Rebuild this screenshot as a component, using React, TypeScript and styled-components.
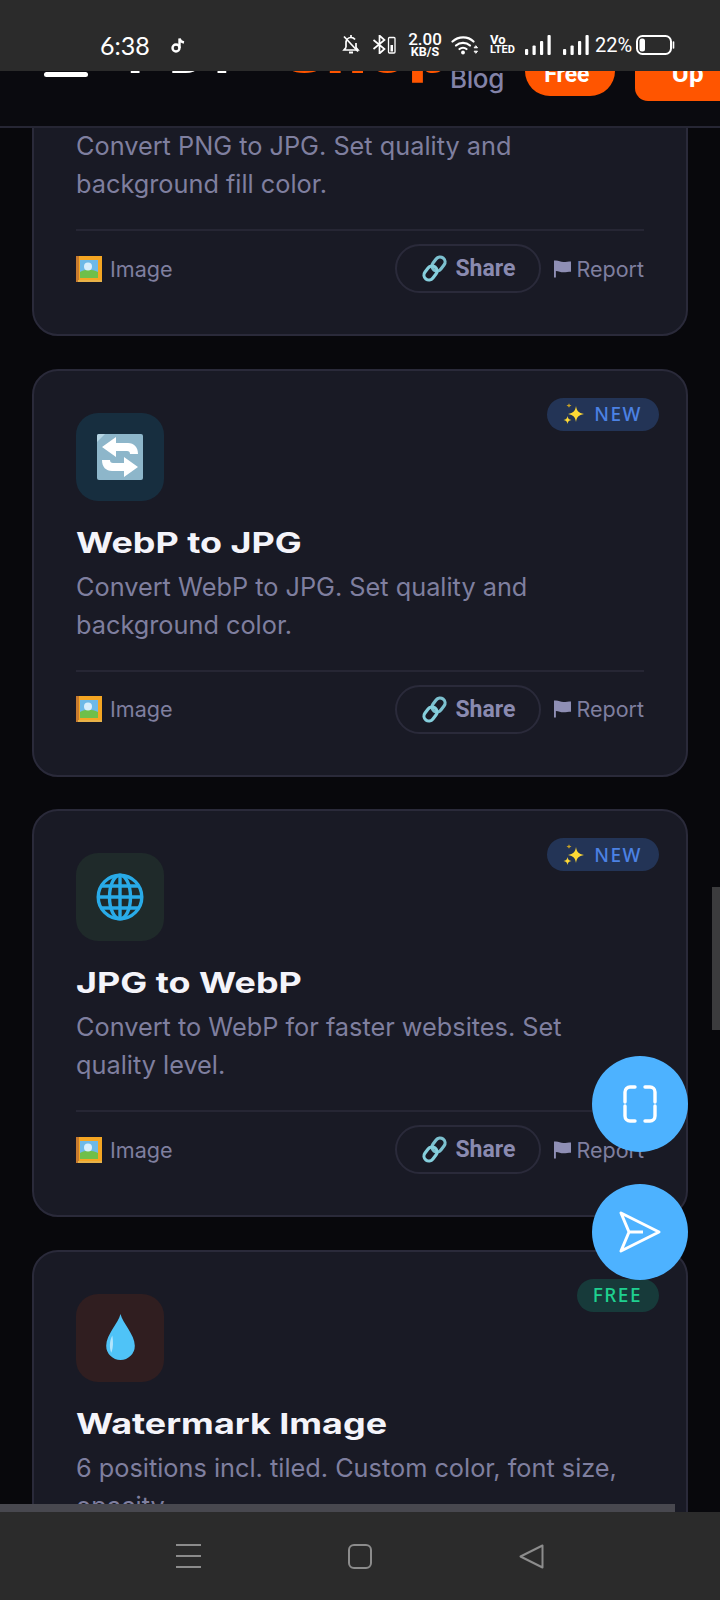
import React from 'react';
import styled, { createGlobalStyle } from 'styled-components';

const GlobalStyle = createGlobalStyle`
  html, body {
    margin: 0;
    padding: 0;
    background: #08080c;
  }
`;

const BODY_FONT = `'Inter', 'Noto Sans', sans-serif`;

const Screen = styled.div`
  position: relative;
  width: 720px;
  height: 1600px;
  overflow: hidden;
  display: flex;
  flex-direction: column;
  background: #08080c;
  font-family: ${BODY_FONT};
`;

/* status bar */
const StatusBar = styled.div`
  flex: 0 0 71px;
  z-index: 3;
  display: flex;
  align-items: center;
  padding: 18px 45px 0 100px;
  box-sizing: border-box;
  background: #2b2b2b;
  color: #fff;
`;

const Clock = styled.span`
  font-family: 'Lato', sans-serif;
  font-size: 25px;
  width: 71px;
`;

const StatusRight = styled.div`
  margin-left: auto;
  display: flex;
  align-items: center;
`;

const Speed = styled.div`
  display: flex;
  flex-direction: column;
  align-items: center;
  width: 34px;
  margin: 0 9px 0 11px;
  font-family: 'Roboto', sans-serif;
  font-weight: 500;
  line-height: 1;
  span:first-child { font-size: 17px; height: 14px; line-height: 14px; }
  span:last-child { font-size: 12.5px; height: 11px; line-height: 11px; font-weight: 700; }
`;

const VoLte = styled.div`
  display: flex;
  flex-direction: column;
  width: 24px;
  margin: 0 11px;
  font-family: 'Roboto', sans-serif;
  font-weight: 700;
  line-height: 1;
  span:first-child { font-size: 13px; height: 11px; line-height: 11px; }
  span:last-child { font-size: 11px; height: 10px; line-height: 10px; }
`;

const Percent = styled.span`
  font-family: 'Roboto', sans-serif;
  font-size: 20px;
  margin: 0 6px;
  width: 35px;
  white-space: nowrap;
`;

/* site header, scrolled partly under the status bar */
const Header = styled.header`
  flex: 0 0 55px;
  z-index: 2;
  display: flex;
  align-items: flex-start;
  overflow: hidden;
  padding-left: 44px;
  background: #0a0a0f;
  border-bottom: 2px solid #262634;
`;

const MenuBar = styled.div`
  flex: 0 0 44px;
  height: 5px;
  margin-top: 1px;
  border-radius: 3px;
  background: #fff;
`;

const Logo = styled.div`
  display: flex;
  margin: -41px 0 0 40px;
  height: 60px;
  font-size: 50px;
  line-height: 50px;
  font-weight: 800;
  white-space: nowrap;
`;

const LogoPdf = styled.span`
  color: #fff;
  width: 155px;
  letter-spacing: 9px;
`;

const LogoShop = styled.span`
  display: inline-block;
  color: #ff5500;
  width: 167px;
  letter-spacing: 1px;
  transform: scaleX(1.27);
  transform-origin: left center;
`;

const BlogLink = styled.span`
  margin: -10px 0 0 0;
  font-size: 26px;
  line-height: 36px;
  font-weight: 500;
  color: #8383a8;
  letter-spacing: -0.4px;
`;

const FreeButton = styled.div`
  flex: 0 0 90px;
  height: 51px;
  margin: -26px 0 0 21px;
  display: flex;
  align-items: flex-end;
  justify-content: center;
  padding: 0 6px 8px 0;
  box-sizing: border-box;
  border-radius: 25px;
  background: #ff5500;
  color: #fff;
  font-family: 'Roboto', sans-serif;
  font-size: 23px;
  line-height: 26px;
  font-weight: 700;
`;

const UpButton = styled.div`
  flex: 0 0 100px;
  height: 60px;
  margin: -30px 0 0 20px;
  display: flex;
  align-items: flex-end;
  padding: 0 0 14px 37px;
  box-sizing: border-box;
  border-radius: 13px;
  background: #ff5500;
  color: #fff;
  font-family: 'Roboto', sans-serif;
  font-size: 26px;
  line-height: 28px;
  font-weight: 700;
`;

/* scrolled card list */
const Viewport = styled.main`
  flex: 1;
  min-height: 0;
  overflow: hidden;
`;

const CardList = styled.div`
  display: flex;
  flex-direction: column;
  gap: 32.5px;
  margin-top: -200px;
  padding: 0 32px;
`;

const Card = styled.article`
  position: relative;
  height: 408px;
  box-sizing: border-box;
  padding: 42px;
  border: 2px solid #2a2a3a;
  border-radius: 26px;
  background: #191a25;
`;

const IconTile = styled.div<{ $bg: string }>`
  width: 88px;
  height: 88px;
  display: flex;
  align-items: center;
  justify-content: center;
  border-radius: 22px;
  background: ${(props) => props.$bg};
`;

const Badge = styled.div<{ $bg: string; $color: string }>`
  position: absolute;
  top: 27px;
  right: 27px;
  height: 33px;
  display: flex;
  align-items: center;
  gap: 9px;
  padding: 0 17px 0 16px;
  border-radius: 17px;
  background: ${(props) => props.$bg};
  color: ${(props) => props.$color};
  font-family: 'Noto Sans', sans-serif;
  font-size: 19px;
  font-weight: 500;
  letter-spacing: 1.5px;
`;

const Title = styled.h3`
  margin: 24px 0 7px;
  font-family: 'Inter', sans-serif;
  font-size: 28.5px;
  line-height: 36px;
  font-weight: 700;
  color: #f4f4fa;
  white-space: nowrap;
  transform: scaleX(1.26);
  transform-origin: left center;
`;

const Description = styled.p`
  margin: 0;
  height: 77px;
  font-size: 25.3px;
  line-height: 38.4px;
  color: #7f7f9f;
`;

const Footer = styled.div`
  margin-top: 25px;
  padding-top: 13px;
  display: flex;
  align-items: center;
  border-top: 2px solid #262634;
`;

const Category = styled.span`
  display: flex;
  align-items: center;
  gap: 8px;
  font-size: 21.6px;
  color: #7f7f9f;
`;

const ShareButton = styled.div`
  margin-left: auto;
  width: 146px;
  height: 49px;
  box-sizing: border-box;
  display: flex;
  align-items: center;
  justify-content: center;
  gap: 7px;
  border: 2px solid #2a2a3a;
  border-radius: 25px;
  font-family: 'Roboto', sans-serif;
  font-size: 23px;
  font-weight: 700;
  color: #8a8ab0;
`;

const ReportLink = styled.span`
  display: flex;
  align-items: center;
  gap: 5px;
  margin-left: 13px;
  font-size: 21.5px;
  color: #7f7f9f;
`;

/* overlays */
const FabStack = styled.div`
  position: absolute;
  right: 32px;
  top: 1056px;
  z-index: 4;
  display: flex;
  flex-direction: column;
  gap: 32px;
`;

const Fab = styled.div`
  width: 96px;
  height: 96px;
  display: flex;
  align-items: center;
  justify-content: center;
  border-radius: 50%;
  background: #4db2ff;
`;

const ScrollThumbY = styled.div`
  position: absolute;
  right: 0;
  top: 887px;
  width: 8px;
  height: 143px;
  background: #3b3b3d;
`;

const ScrollThumbX = styled.div`
  position: absolute;
  left: 0;
  bottom: 88px;
  width: 675px;
  height: 8px;
  background: #48484f;
`;

const NavBar = styled.nav`
  flex: 0 0 88px;
  z-index: 3;
  display: flex;
  align-items: flex-start;
  padding: 32px 0 0 176px;
  box-sizing: border-box;
  gap: 147px;
  background: #2b2b2b;
`;

/* drawings */
const BellOff = () => (
  <svg width="18" height="21" viewBox="0 0 18 21" fill="none" stroke="#fff" strokeWidth="1.7">
    <path d="M4 13.500V9c0-3 2-5.500 5-5.500 1.800 0 3.200.8 4 2M14 9v4.500l2 2.500H2l2-2.500" />
    <path d="M7 18.500h4" strokeWidth="2" />
    <path d="M9 1v2.500" />
    <path d="M2 2.500l14 15" />
  </svg>
);

const BluetoothBattery = () => (
  <svg width="25" height="19" viewBox="0 0 25 19" fill="none" stroke="#fff" strokeWidth="1.7" style={{ marginLeft: 12 }}>
    <path d="M1.500 5l11 9-5 4.500V.5l5 4.500-11 9" />
    <rect x="16.500" y="2.500" width="6.500" height="15.500" rx="1" strokeWidth="1.300" />
    <rect x="18.500" y="10" width="2.500" height="6.500" fill="#fff" stroke="none" />
  </svg>
);

const Wifi = () => (
  <svg width="28" height="20" viewBox="0 0 28 20" fill="none" stroke="#fff" strokeWidth="2.200" strokeLinecap="round">
    <path d="M1.500 6.500C7.500 1 17 1 22.500 6.500" />
    <path d="M5 10.500c4-3.500 10-3.500 14 0" />
    <path d="M8.500 14c2-1.700 5-1.700 7 0" />
    <circle cx="12" cy="17.500" r="1.900" fill="#fff" stroke="none" />
    <path d="M25 11l1.500 1.800h-3zM25 18l1.500-1.800h-3z" fill="#fff" strokeWidth="1" />
  </svg>
);

const Signal = ({ gap }: { gap: number }) => (
  <svg width="26" height="20" viewBox="0 0 26 20" fill="#fff" style={{ marginRight: gap }}>
    <rect x="0" y="14" width="3.200" height="6" rx="1" />
    <rect x="7.500" y="10.500" width="3.200" height="9.500" rx="1" />
    <rect x="15" y="6" width="3.200" height="14" rx="1" />
    <rect x="22.500" y="0" width="3.200" height="20" rx="1" />
  </svg>
);

const Battery = () => (
  <svg width="39" height="20" viewBox="0 0 39 20" fill="none">
    <rect x="1" y="1" width="34" height="18" rx="5.500" stroke="#fff" strokeWidth="2" />
    <rect x="3.500" y="3.500" width="5.500" height="13" rx="2.500" fill="#fff" />
    <path d="M37.500 7v6" stroke="#fff" strokeWidth="1.600" strokeLinecap="round" />
  </svg>
);

const MusicNote = () => (
  <svg width="14" height="16" viewBox="0 0 14 16" fill="none" stroke="#fff" strokeWidth="2.400">
    <circle cx="5" cy="11" r="3.500" />
    <path d="M8.500 11V1.500c.5 2.500 2 3.500 4.500 4" />
  </svg>
);

const RepeatEmoji = () => (
  <svg width="46" height="46" viewBox="0 0 46 46">
    <rect width="46" height="46" rx="2" fill="#8db6ca" />
    <path d="M0 8V2a2 2 0 012-2h6z" fill="#b5d5e3" />
    <path d="M19 3v6h12c6 0 10 4 10 11h-8c0-2-1-3-3-3H19v6L5 13z" fill="#fff" />
    <path d="M27 43v-6H15C9 37 5 33 5 26h8c0 2 1 3 3 3h11v-6l14 10z" fill="#fff" />
  </svg>
);

const GlobeEmoji = () => (
  <svg width="48" height="48" viewBox="0 0 48 48" fill="none" stroke="#29abe8" strokeWidth="3.400">
    <circle cx="24" cy="24" r="21.800" />
    <ellipse cx="24" cy="24" rx="10.500" ry="21.800" />
    <path d="M24 2v44M2.200 24h43.600M5.500 13h37M5.500 35h37" />
  </svg>
);

const DropEmoji = () => (
  <svg width="31" height="47" viewBox="0 0 30 46">
    <path d="M15 0c2 9 14 20 14 31a14 14 0 01-28 0C1 20 13 9 15 0z" fill="#4fc3f7" />
    <path d="M7 21c-3 6-3 12-1 17 2-5 2-11 1-17z" fill="#b3e5fc" />
  </svg>
);

const PictureEmoji = () => (
  <svg width="26" height="26" viewBox="0 0 26 26">
    <rect width="26" height="26" fill="#f5a623" />
    <path d="M0 0h3v26H0z" fill="#c77a2e" />
    <rect x="4" y="4" width="18" height="18" fill="#6db9e8" />
    <path d="M4 16c5-3 12-3 18 0v6H4z" fill="#6fbf4a" />
    <circle cx="12" cy="10.500" r="4" fill="#d8eefb" />
    <path d="M2 24h24v2H2z" fill="#e8b248" />
  </svg>
);

const LinkEmoji = () => (
  <svg width="27" height="27" viewBox="0 0 27 27" fill="none" stroke="#7cc0cf" strokeWidth="3.200" strokeLinecap="round">
    <rect x="12.500" y="1.500" width="10" height="15" rx="5" transform="rotate(38 17.500 9)" />
    <rect x="4.500" y="10.500" width="10" height="15" rx="5" transform="rotate(38 9.500 18)" stroke="#86cfdd" />
  </svg>
);

const FlagIcon = () => (
  <svg width="17" height="18" viewBox="0 0 18 18">
    <path d="M0 0h2c3 0 5 1.500 8 1.500 3 0 5-.5 8-.5v11c-3 0-5 .5-8 .5-3 0-5-1.500-8-1.500v7H0z" fill="#8f8fb5" />
  </svg>
);

const SparklesEmoji = () => (
  <svg width="22" height="24" viewBox="0 0 22 24" fill="#fdd835">
    <path d="M13 4c.8 5 2.500 6.700 8 8-5.500 1.300-7.200 3-8 8-.8-5-2.500-6.700-8-8 5.500-1.300 7.200-3 8-8z" />
    <path d="M4.500 14c.4 2.500 1.200 3.300 4 4-2.800.7-3.600 1.500-4 4-.4-2.500-1.200-3.300-4-4 2.800-.7 3.600-1.500 4-4z" />
    <path d="M6 1c.2 1.500.8 2 2.500 2.500C6.800 4 6.200 4.500 6 6c-.2-1.500-.8-2-2.500-2.500C5.200 3 5.800 2.500 6 1z" fill="#c9a227" />
  </svg>
);

const ExpandIcon = () => (
  <svg width="34" height="38" viewBox="0 0 34 38" fill="none" stroke="#fff" strokeWidth="3.400" strokeLinecap="round">
    <path d="M12 2H7a5 5 0 00-5 5v10M22 2h5a5 5 0 015 5v10M12 36H7a5 5 0 01-5-5V21M22 36h5a5 5 0 005-5V21" />
  </svg>
);

const SendIcon = () => (
  <svg width="96" height="96" viewBox="0 0 96 96" fill="none" stroke="#fff" strokeWidth="3" strokeLinejoin="round">
    <path d="M67 48L29 29l8 19-8 19zM37 48h14" />
  </svg>
);

const MenuIcon = () => (
  <svg width="25" height="24" viewBox="0 0 25 24" stroke="#8c8c8c" strokeWidth="2">
    <path d="M0 1h25M0 12h25M0 23h25" />
  </svg>
);

const HomeIcon = () => (
  <svg width="24" height="25" viewBox="0 0 24 25" fill="none" stroke="#8c8c8c" strokeWidth="2">
    <rect x="1" y="1" width="22" height="23" rx="5" />
  </svg>
);

const BackIcon = () => (
  <svg width="25" height="25" viewBox="0 0 25 25" fill="none" stroke="#8c8c8c" strokeWidth="2" strokeLinejoin="round">
    <path d="M23.500 1.500v22L1.500 12.500z" />
  </svg>
);

interface Tool {
  title: string;
  text: string;
  tile: string;
  emoji?: React.ReactNode;
  badge?: 'new' | 'free';
}

const tools: Tool[] = [
  { title: 'PNG to JPG', text: 'Convert PNG to JPG. Set quality and background fill color.', tile: '#172e3f', badge: 'new' },
  { title: 'WebP to JPG', text: 'Convert WebP to JPG. Set quality and background color.', tile: '#172e3f', emoji: <RepeatEmoji />, badge: 'new' },
  { title: 'JPG to WebP', text: 'Convert to WebP for faster websites. Set quality level.', tile: '#1f2a2a', emoji: <GlobeEmoji />, badge: 'new' },
  { title: 'Watermark Image', text: '6 positions incl. tiled. Custom color, font size, opacity', tile: '#301e20', emoji: <DropEmoji />, badge: 'free' },
];

const ToolCard = ({ tool }: { tool: Tool }) => (
  <Card>
    {tool.badge === 'new' && (
      <Badge $bg="#233456" $color="#4c82e4">
        <SparklesEmoji />
        NEW
      </Badge>
    )}
    {tool.badge === 'free' && (
      <Badge $bg="#173a3a" $color="#1fd08f">
        FREE
      </Badge>
    )}
    <IconTile $bg={tool.tile}>{tool.emoji}</IconTile>
    <Title>{tool.title}</Title>
    <Description>{tool.text}</Description>
    <Footer>
      <Category>
        <PictureEmoji />
        Image
      </Category>
      <ShareButton>
        <LinkEmoji />
        Share
      </ShareButton>
      <ReportLink>
        <FlagIcon />
        Report
      </ReportLink>
    </Footer>
  </Card>
);

const App: React.FC = () => {
  return (
    <Screen>
      <GlobalStyle />
      <StatusBar>
        <Clock>6:38</Clock>
        <MusicNote />
        <StatusRight>
          <BellOff />
          <BluetoothBattery />
          <Speed>
            <span>2.00</span>
            <span>KB/S</span>
          </Speed>
          <Wifi />
          <VoLte>
            <span>Vo</span>
            <span>LTED</span>
          </VoLte>
          <Signal gap={12} />
          <Signal gap={0} />
          <Percent>22%</Percent>
          <Battery />
        </StatusRight>
      </StatusBar>
      <Header>
        <MenuBar />
        <Logo>
          <LogoPdf>PDF</LogoPdf>
          <LogoShop>Shop</LogoShop>
        </Logo>
        <BlogLink>Blog</BlogLink>
        <FreeButton>Free</FreeButton>
        <UpButton>Up</UpButton>
      </Header>
      <Viewport>
        <CardList>
          {tools.map((tool) => (
            <ToolCard key={tool.title} tool={tool} />
          ))}
        </CardList>
      </Viewport>
      <NavBar>
        <MenuIcon />
        <HomeIcon />
        <BackIcon />
      </NavBar>
      <ScrollThumbY />
      <ScrollThumbX />
      <FabStack>
        <Fab>
          <ExpandIcon />
        </Fab>
        <Fab>
          <SendIcon />
        </Fab>
      </FabStack>
    </Screen>
  );
};

export default App;
